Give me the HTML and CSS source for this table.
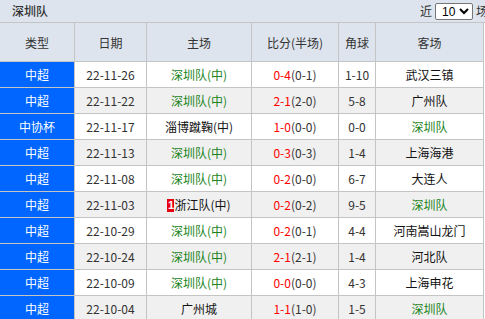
FILE: index.html
```html
<!DOCTYPE html>
<html lang="zh">
<head>
<meta charset="utf-8">
<title>深圳队</title>
<link rel="stylesheet" href="styles.css">
</head>
<body>
<div class="page">
  <div class="topbar">
    <span class="title">深圳队</span>
    <span class="filter">近
      <select class="count"><option>10</option></select>
      场</span>
  </div>
  <table class="matches">
    <colgroup>
      <col class="c1"><col class="c2"><col class="c3"><col class="c4"><col class="c5"><col class="c6">
    </colgroup>
    <thead>
      <tr><th>类型</th><th>日期</th><th>主场</th><th>比分(半场)</th><th>角球</th><th>客场</th></tr>
    </thead>
    <tbody>
      <tr><td class="type">中超</td><td>22-11-26</td><td class="me">深圳队(中)</td><td><span class="sc">0-4</span>(0-1)</td><td>1-10</td><td class="opp">武汉三镇</td></tr>
      <tr><td class="type">中超</td><td>22-11-22</td><td class="me">深圳队(中)</td><td><span class="sc">2-1</span>(2-0)</td><td>5-8</td><td class="opp">广州队</td></tr>
      <tr><td class="type">中协杯</td><td>22-11-17</td><td class="opp">淄博蹴鞠(中)</td><td><span class="sc">1-0</span>(0-0)</td><td>0-0</td><td class="me">深圳队</td></tr>
      <tr><td class="type">中超</td><td>22-11-13</td><td class="me">深圳队(中)</td><td><span class="sc">0-3</span>(0-3)</td><td>1-4</td><td class="opp">上海海港</td></tr>
      <tr><td class="type">中超</td><td>22-11-08</td><td class="me">深圳队(中)</td><td><span class="sc">0-2</span>(0-0)</td><td>6-7</td><td class="opp">大连人</td></tr>
      <tr><td class="type">中超</td><td>22-11-03</td><td class="opp"><span class="badge">1</span>浙江队(中)</td><td><span class="sc">0-2</span>(0-2)</td><td>9-5</td><td class="me">深圳队</td></tr>
      <tr><td class="type">中超</td><td>22-10-29</td><td class="me">深圳队(中)</td><td><span class="sc">0-2</span>(0-1)</td><td>4-4</td><td class="opp">河南嵩山龙门</td></tr>
      <tr><td class="type">中超</td><td>22-10-24</td><td class="me">深圳队(中)</td><td><span class="sc">2-1</span>(2-1)</td><td>1-4</td><td class="opp">河北队</td></tr>
      <tr><td class="type">中超</td><td>22-10-09</td><td class="me">深圳队(中)</td><td><span class="sc">0-0</span>(0-0)</td><td>4-3</td><td class="opp">上海申花</td></tr>
      <tr><td class="type">中超</td><td>22-10-04</td><td class="opp">广州城</td><td><span class="sc">1-1</span>(1-0)</td><td>1-5</td><td class="me">深圳队</td></tr>
    </tbody>
  </table>
</div>
</body>
</html>
```
FILE: styles.css
```css
html, body {
  margin: 0;
  padding: 0;
  background: #ffffff;
  overflow: hidden;
}
body {
  font-family: "Noto Sans CJK SC", "Liberation Sans", sans-serif;
  font-size: 12px;
  color: #333333;
}
.page {
  width: 490px;
}
.topbar {
  height: 22px;
  background: #dde4ed;
  border-bottom: 1px solid #c4c4c4;
  display: flex;
  align-items: center;
  justify-content: space-between;
  padding: 0 0 0 12px;
  box-sizing: content-box;
  width: 476px;
}
.title {
  color: #333;
  font-weight: 500;
  line-height: 22px;
}
.filter {
  display: flex;
  align-items: center;
  gap: 3px;
  line-height: 22px;
  color: #333;
}
.count {
  width: 38px;
  height: 17px;
  font-family: "Liberation Sans", sans-serif;
  font-size: 12px;
  padding: 0 0 0 2px;
  border: 1px solid #767676;
  border-radius: 2px;
  background: #fff;
  color: #000;
}
.matches {
  border-collapse: separate;
  border-spacing: 0;
  table-layout: fixed;
  width: 484px;
}
.c1 { width: 75px; }
.c2 { width: 72px; }
.c3 { width: 105px; }
.c4 { width: 87px; }
.c5 { width: 37px; }
.c6 { width: 108px; }
.matches th, .matches td {
  border-right: 1px solid #c4c4c4;
  border-bottom: 1px solid #c4c4c4;
  padding: 0;
  text-align: center;
  white-space: nowrap;
  overflow: hidden;
}
.matches th {
  height: 38px;
  background: #dde4ed;
  font-weight: normal;
  color: #333;
  font-size: 12px;
}
.matches td {
  height: 25px;
  line-height: 25px;
  color: #333;
}
.matches tbody tr:nth-child(even) td {
  background: #f0f0f0;
}
.matches tbody tr td.type {
  background: #0066ff;
  color: #ffffff;
}
.matches tbody tr td.me { color: #1a841a; }
.matches tbody tr td.opp { color: #111; }
.sc { color: #ff0000; }
.badge {
  display: inline-block;
  background: #e60012;
  color: #fff;
  font-family: "Liberation Sans", sans-serif;
  font-weight: bold;
  font-size: 11px;
  line-height: 13px;
  width: 7px;
  text-align: center;
  vertical-align: middle;
  position: relative;
  top: -1px;
}
```
